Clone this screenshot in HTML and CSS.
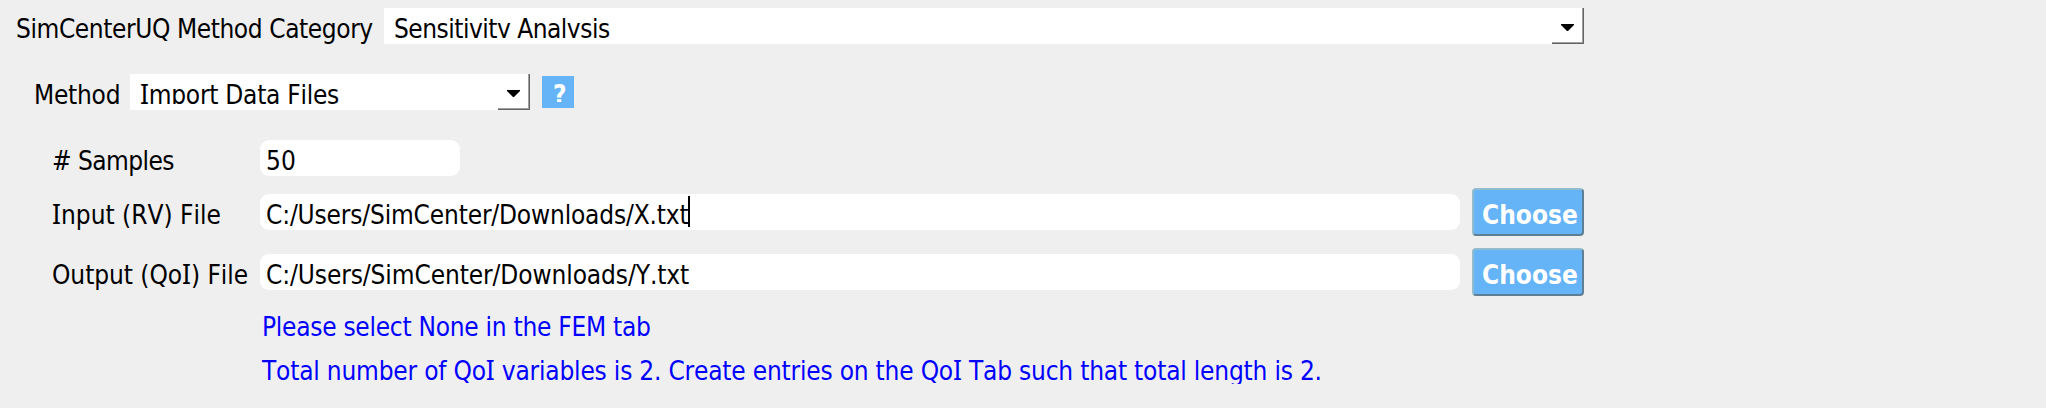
FILE: index.html
```html
<!DOCTYPE html>
<html lang="en">
<head>
<meta charset="utf-8">
<title>SimCenterUQ</title>
<link rel="stylesheet" href="styles.css">
</head>
<body>
<main class="panel">
  <div class="row row-category">
    <label class="label label-category"><span class="t t-category">SimCenterUQ Method Category</span></label>
    <div class="combo combo-wide">
      <span class="combo-text"><span class="t t-sens">Sensitivity Analysis</span></span>
      <span class="drop"><svg width="13" height="7" viewBox="0 0 13 7"><path d="M0 0H13V1L7 7H6L0 1Z"/></svg></span>
    </div>
  </div>
  <div class="row row-method">
    <label class="label label-method"><span class="t t-method">Method</span></label>
    <div class="combo combo-short">
      <span class="combo-text"><span class="t t-import"><span class="serif-i">I</span>mport Data Files</span></span>
      <span class="drop"><svg width="13" height="7" viewBox="0 0 13 7"><path d="M0 0H13V1L7 7H6L0 1Z"/></svg></span>
    </div>
    <div class="help"><span class="help-mark">?</span></div>
  </div>
  <div class="row row-samples">
    <label class="label label-field"><span class="t t-samples"># Samples</span></label>
    <div class="field field-short"><span class="t t-fifty">50</span></div>
  </div>
  <div class="row row-file">
    <label class="label label-field"><span class="t t-input"><span class="serif-i">I</span>nput (RV) File</span></label>
    <div class="field"><span class="t t-path-x">C:/Users/SimCenter/Downloads/X.txt</span><span class="caret"></span></div>
    <div class="choose"><span class="t t-choose">Choose</span></div>
  </div>
  <div class="row row-file">
    <label class="label label-field"><span class="t t-output">Output (Qo<span class="serif-i">I</span>) File</span></label>
    <div class="field"><span class="t t-path-y">C:/Users/SimCenter/Downloads/Y.txt</span></div>
    <div class="choose"><span class="t t-choose">Choose</span></div>
  </div>
  <p class="note note-first"><span class="t t-fem">Please select None in the FEM tab</span></p>
  <p class="note note-second"><span class="t t-total">Total number of Qo<span class="serif-i">I</span> variables is 2. Create entries on the Qo<span class="serif-i">I</span> Tab such that total length is 2.</span></p>
</main>
</body>
</html>
```
FILE: styles.css
```css
* { box-sizing: border-box; }
body {
  margin: 0;
  background: #efefef;
  color: #000;
  font-family: "DejaVu Sans Condensed", "Noto Sans", sans-serif;
  font-size: 26px;
  line-height: 36px;
  font-kerning: none;
  overflow: hidden;
}
.panel { width: 1584px; height: 408px; padding-top: 8px; }
.row { display: flex; height: 36px; white-space: nowrap; }
.row-method { margin-top: 30px; }
.row-samples { margin-top: 30px; }
.row-file { height: 48px; margin-top: 12px; align-items: center; }
.t { white-space: nowrap; }
.t-category { letter-spacing: -0.41px; }
.t-sens { letter-spacing: -0.5px; }
.t-method { letter-spacing: -0.25px; }
.t-import { letter-spacing: -0.26px; }
.t-samples { letter-spacing: -0.55px; }
.t-input { letter-spacing: 0; }
.t-output { letter-spacing: -0.05px; }
.t-path-x { letter-spacing: -0.17px; }
.t-path-y { letter-spacing: -0.1px; }
.t-fem { letter-spacing: -0.27px; }
.t-total { letter-spacing: -0.2px; }
.serif-i { font-family: "Noto Sans", sans-serif; font-size: 26.5px; line-height: 0; }
.label { padding-top: 3px; height: 36px; }
.label-category { width: 384px; padding-left: 16px; }
.label-method { width: 130px; padding-left: 34px; }
.label-field { width: 260px; padding-left: 52px; }
.combo { display: flex; background: #fff; height: 36px; }
.combo-wide { width: 1200px; }
.combo-short { width: 400px; }
.combo-text { flex: 1; height: 30px; padding: 3px 0 0 10px; overflow: hidden; }
.drop {
  width: 32px;
  height: 36px;
  padding: 14px 0 0 9px;
  line-height: 0;
  box-shadow: inset -1px -1px #646464, inset -2px -2px #a0a0a0;
}
.help {
  width: 32px;
  height: 32px;
  margin: 2px 0 0 12px;
  background: #64b4f7;
  color: #fff;
  font-weight: bold;
}
.help-mark { display: block; height: 26px; padding: 1px 0 0 11px; overflow: hidden; }
.field { position: relative; width: 1200px; height: 36px; padding: 3px 0 0 6px; border-radius: 9px; background: #fff; }
.field-short { width: 200px; }
.caret { position: absolute; left: 428px; top: 2px; width: 2px; height: 31px; background: #000; }
.choose {
  width: 112px;
  height: 48px;
  margin-left: 12px;
  padding: 7px 0 0 8px;
  border: 2px solid;
  border-color: #8fbccf #5f8094 #5f8094 #8fbccf;
  border-radius: 4px;
  background: #64b4f7;
  color: #fff;
  font-weight: bold;
}
.note { margin: 0; padding-left: 262px; height: 36px; color: #00f; white-space: nowrap; overflow: hidden; }
.note-first { margin-top: 13px; }
.note-second { margin-top: 8px; height: 31px; }
```
